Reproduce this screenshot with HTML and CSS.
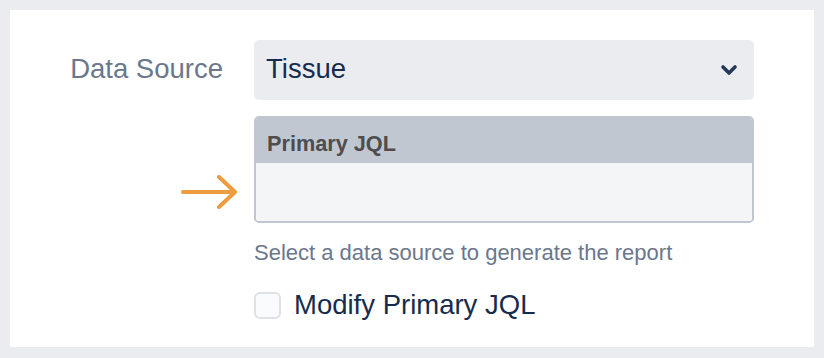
FILE: index.html
```html
<!DOCTYPE html>
<html lang="en">
<head>
    <meta charset="UTF-8">
    <meta name="viewport" content="width=device-width, initial-scale=1.0">
    <title>Report settings</title>
    <link rel="stylesheet" href="styles.css">
</head>
<body>
    <div class="panel">
        <div class="form-grid">
            <label class="field-label" for="dataSource">Data Source</label>
            <div class="select-box" id="dataSource">
                <span class="select-value">Tissue</span>
                <svg class="chevron" width="18" height="12" viewBox="0 0 18 12">
                    <path d="M3 3 L9 9 L15 3" fill="none" stroke="#253858" stroke-width="3.6" stroke-linecap="round" stroke-linejoin="round"/>
                </svg>
            </div>

            <div class="hint-cell">
                <svg class="hint-arrow" width="60" height="34" viewBox="0 0 60 34">
                    <path d="M3 17 H55 M39 2 L55 17 L39 32" fill="none" stroke="#EE9D3E" stroke-width="4" stroke-linecap="round" stroke-linejoin="round"/>
                </svg>
            </div>
            <div class="jql-box">
                <div class="jql-header">Primary JQL</div>
                <div class="jql-body"></div>
            </div>

            <div></div>
            <div class="field-extra">
                <div class="help-text">Select a data source to generate the report</div>
                <label class="check-row">
                    <span class="checkbox"></span>
                    <span class="check-label">Modify Primary JQL</span>
                </label>
            </div>
        </div>
    </div>
</body>
</html>
```

FILE: styles.css
```css
body, html {
    margin: 0;
    height: 100%;
    font-family: "Liberation Sans", Arial, sans-serif;
    background: #EBECF0;
}
body {
    padding: 10px;
    box-sizing: border-box;
}
.panel {
    background: #FFF;
    height: 337px;
    width: 804px;
    padding-top: 30px;
    box-sizing: border-box;
}
.form-grid {
    display: grid;
    grid-template-columns: 213px 500px;
    column-gap: 31px;
    row-gap: 16px;
}
.field-label {
    font-size: 27.5px;
    color: #6B778C;
    text-align: right;
    align-self: center;
    line-height: 32px;
    margin-top: -2px;
}
.select-box {
    height: 60px;
    background: #EBECF0;
    border-radius: 5px;
    display: flex;
    align-items: center;
    justify-content: space-between;
    padding: 0 16px 0 12px;
    box-sizing: border-box;
}
.select-value {
    font-size: 27.5px;
    color: #172B4D;
    line-height: 32px;
    margin-top: -2px;
}
.hint-cell {
    display: flex;
    justify-content: flex-end;
    align-items: flex-end;
    margin-right: -17px;
    padding-bottom: 14px;
}
.jql-box {
    height: 107px;
    border: 2px solid #C1C7D0;
    border-radius: 5px;
    box-sizing: border-box;
    overflow: hidden;
    display: flex;
    flex-direction: column;
}
.jql-header {
    height: 45px;
    background: #C1C7D0;
    color: #4D4D4D;
    font-weight: bold;
    font-size: 21.7px;
    line-height: 26px;
    padding: 13px 0 0 11px;
    box-sizing: border-box;
}
.jql-body {
    flex: 1;
    background: #F4F5F7;
}
.field-extra {
    margin-top: 1px;
}
.help-text {
    font-size: 22px;
    line-height: 26px;
    color: #6B778C;
}
.check-row {
    display: flex;
    align-items: center;
    gap: 13px;
    margin-top: 23px;
}
.checkbox {
    width: 27px;
    height: 27px;
    border: 2px solid #DFE1E6;
    background: #FAFBFC;
    border-radius: 6px;
    box-sizing: border-box;
}
.check-label {
    font-size: 27.5px;
    line-height: 32px;
    color: #172B4D;
}
```
